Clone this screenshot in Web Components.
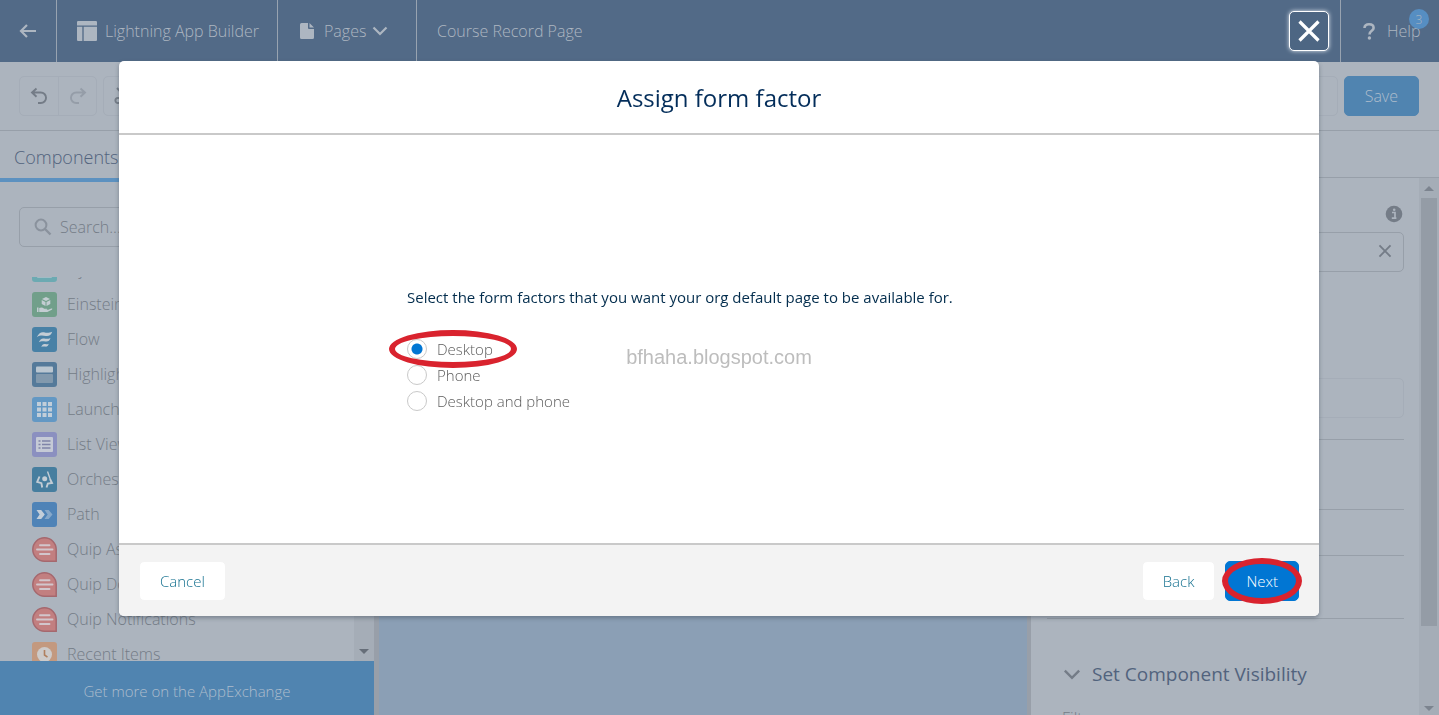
<!DOCTYPE html>
<html lang="en">
<head>
<meta charset="utf-8">
<meta name="viewport" content="width=device-width, initial-scale=1">
<title>Lightning App Builder</title>
<style>
  html, body { margin: 0; height: 100%; }
  body {
    font-family: "Open Sans", "Noto Sans", sans-serif;
    font-weight: 300;
    font-size: 16px;
    line-height: 24px;
    overflow: hidden;
    --surface: #acb4be;
    --line: #979fa9;
    --line-soft: #a5adb8;
    --navy: #526a87;
    --brand: #5084b0;
    --muted: #747c87;
    --ring: #d9232e;
  }
</style>
</head>
<body>
<app-builder></app-builder>

<script>
const ICONS = {
  back: ['0 0 18 16', '<path d="M8 2 2 8l6 6M2 8h15" fill="none" stroke="currentColor" stroke-width="2.2"/>'],
  layout: ['0 0 18 18', '<path d="M1 0h16a1 1 0 0 1 1 1v3H0V1a1 1 0 0 1 1-1zM0 5.200h4.800V18H1a1 1 0 0 1-1-1zM6 5.200H18V17a1 1 0 0 1-1 1H6z" fill="currentColor"/>'],
  page: ['0 0 14 16', '<path d="M1.500 0H8v5a1 1 0 0 0 1 1h5v8.500a1.500 1.500 0 0 1-1.500 1.500h-11A1.500 1.500 0 0 1 0 14.500v-13A1.500 1.500 0 0 1 1.500 0zM9.500 0 14 4.500H9.500z" fill="currentColor"/>'],
  chevron: ['0 0 16 10', '<path d="m1.500 1.500 6.500 6.500 6.500-6.500" fill="none" stroke="currentColor" stroke-width="2.200"/>'],
  help: ['0 0 12 17', '<path d="M1.500 5C1.500 2.500 3.200 1.300 6 1.300s4.600 1.400 4.600 3.600C10.600 8 6.500 7.600 6.500 11.500" fill="none" stroke="currentColor" stroke-width="2.600"/><circle cx="6.400" cy="15" r="1.700" fill="currentColor"/>'],
  undo: ['0 0 18 18', '<path d="M6.500 1.500 2 5.500l4.500 4.200M2.500 5.500h8.300a5 5 0 0 1 0 10.500H8" fill="none" stroke="currentColor" stroke-width="1.900"/>'],
  redo: ['0 0 18 18', '<path d="m11.500 1.500 4.500 4-4.500 4.200M15.500 5.500H7.200a5 5 0 0 0 0 10.500H10" fill="none" stroke="currentColor" stroke-width="1.900"/>'],
  cut: ['0 0 18 18', '<g fill="none" stroke="currentColor" stroke-width="1.900"><circle cx="4" cy="13.500" r="2.600"/><circle cx="14" cy="13.500" r="2.600"/><path d="m3 1 9.500 10.500M15 1 5.500 11.500"/></g>'],
  search: ['0 0 18 18', '<circle cx="7" cy="7" r="5.400" fill="none" stroke="currentColor" stroke-width="2"/><path d="m11 11 5.500 5.500" stroke="currentColor" stroke-width="2.400"/>'],
  close: ['0 0 24 24', '<path d="m2.500 2.500 19 19m0-19-19 19" stroke="currentColor" stroke-width="3.200"/>'],
  info: ['0 0 18 18', '<circle cx="9" cy="9" r="8.300" fill="currentColor"/><path d="M7 7.500h3V13M6.800 13.200h4.600" fill="none" stroke="#acb4be" stroke-width="1.700"/><circle cx="9.200" cy="4.800" r="1.300" fill="#acb4be"/>'],
  up: ['0 0 10 5', '<path d="M0 5h10L5 0z" fill="currentColor"/>'],
  down: ['0 0 10 5', '<path d="M0 0h10L5 5z" fill="currentColor"/>'],

  related: ['0 0 25 25', '<rect width="25" height="25" rx="3" fill="#6caab2"/><rect x="5" y="5" width="15" height="16" rx="1" fill="#a0bcc5"/>'],
  einstein: ['0 0 25 25', '<rect width="25" height="25" rx="3" fill="#719f8a"/><g fill="#c3cdd2"><path d="m14 5 4 2-4 2-4-2zM9.700 8l3.800 1.900v4L9.700 12zM18.300 8l-3.800 1.900v4l3.800-1.900z"/><path d="M5 15.500h1.500V20H5zM7.200 16c2-1 3.500-.5 5 .7h2.500c1 0 1 1 0 1.100h-2l3 .1 3.500-1.300c1.200-.2 1.500.5.600 1.200l-4.500 2.100H7.200z"/></g>'],
  flow: ['0 0 25 25', '<rect width="25" height="25" rx="3" fill="#4881a6"/><g fill="#c3cdd5"><path d="M4.800 10.200C6.500 6.500 9 4.600 12 5.300c2.500.6 4.500 1 8.200-.5-.8 3-3.200 4.700-6.400 4.200-3.300-.5-5.500-1-9 1.200z"/><path d="M6.800 15.200c1.200-3 3-4.200 5.400-3.700 2 .4 3.800.7 6.300-.5-.7 2.700-2.600 3.900-5 3.500-2.500-.4-4.200-.8-6.700.7z"/><path d="M9.300 19.900c.7-2.500 2.200-3.300 4-2.900 1.200.3 2 .4 3.400-.3-.4 2.200-1.800 3.100-3.500 2.900-1.500-.2-2.500-.3-3.900.3z"/></g>'],
  highlights: ['0 0 25 25', '<rect width="25" height="25" rx="3" fill="#557a9a"/><rect x="4" y="4.500" width="17" height="6" rx="1" fill="#bac6d0"/><rect x="4" y="12" width="17" height="9" rx="1" fill="#8299ad"/>'],
  launchpad: ['0 0 25 25', '<rect width="25" height="25" rx="3" fill="#6398c4"/><path d="M5 5h4v4H5zM10.500 5h4v4h-4zM16 5h4v4h-4zM5 10.500h4v4H5zM10.500 10.500h4v4h-4zM16 10.500h4v4h-4zM5 16h4v4H5zM10.500 16h4v4h-4zM16 16h4v4h-4z" fill="#c2ced9"/>'],
  list: ['0 0 25 25', '<rect width="25" height="25" rx="3" fill="#8b90c0"/><rect x="4" y="5" width="17" height="15" rx="1" fill="#c5cad6"/><path d="M6.500 9h2M10 9h8.500M6.500 12.500h2M10 12.500h8.500M6.500 16h2M10 16h8.500" stroke="#7f84a8" stroke-width="1.600"/>'],
  orchestration: ['0 0 25 25', '<rect width="25" height="25" rx="3" fill="#467e9f"/><circle cx="12.700" cy="11.800" r="2.500" fill="#c3cdd5"/><g fill="none" stroke="#c3cdd5" stroke-width="1.900"><path d="M7.500 9.500 5.200 15l4.200 1.200.8 4.300"/><path d="m18 12 2 4-4.200.6-1.300 3.900"/><path d="m15.500 4.500 2.700 7.500" stroke-width="1.400"/></g>'],
  path: ['0 0 25 25', '<rect width="25" height="25" rx="3" fill="#4f83b7"/><path d="M4.500 8h4.700l3.600 4.500L9.200 17H4.500L7.600 12.500z" fill="#c3ced9"/><path d="M12.500 8h4.200l3.800 4.500-3.800 4.500h-4.200l3.200-4.500z" fill="#86a8ca"/>'],
  quip: ['0 0 25 25', '<path d="M12.500.8a11.700 11.700 0 1 0 0 23.400h11.700V12.500A11.700 11.700 0 0 0 12.500.8z" fill="#c27f80" stroke="#a5686e" stroke-width="1.500"/><path d="M8 8.200h9.500M5 12.500h15.500M8 17h9.500" stroke="#d2c6cc" stroke-width="1.900" stroke-linecap="round"/>'],
  recent: ['0 0 25 25', '<rect width="25" height="25" rx="3" fill="#c3997f"/><circle cx="12.500" cy="12.500" r="7.500" fill="#cdcbca"/><path d="M12.500 8v5l3 2.200" fill="none" stroke="#b0805f" stroke-width="1.600"/>']
};

class BaseElement extends HTMLElement {
  connectedCallback() {
    if (this.shadowRoot) return;
    this.attachShadow({ mode: 'open' }).innerHTML =
      `<style>*{box-sizing:border-box} button,input{font:inherit;color:inherit} ${this.css()}</style>${this.html()}`;
  }
}

/* <ui-icon name size> : size is the width, the height follows the view box */
class UiIcon extends BaseElement {
  css() { return `:host{display:inline-block;flex:none;line-height:0}svg{display:block;width:100%}`; }
  html() {
    const [box, body] = ICONS[this.getAttribute('name')];
    const [, , w, h] = box.split(' ').map(Number);
    const width = Number(this.getAttribute('size') || w);
    return `<style>:host{width:${width}px}</style><svg viewBox="${box}" height="${Math.round(width * h / w)}" aria-hidden="true">${body}</svg>`;
  }
}

/* Red ellipse drawn over whatever is slotted into it */
class HighlightRing extends BaseElement {
  css() {
    return `:host{display:inline-block;position:relative}
      i{position:absolute;inset:var(--ring-inset,-3px);border:6px solid var(--ring);border-radius:50%;pointer-events:none}`;
  }
  html() { return `<slot></slot><i></i>`; }
}

class UiButton extends BaseElement {
  css() {
    return `:host{display:inline-block}
      button{height:40px;padding:0 20px;font-size:15px;border:1px solid #f3f3f3;border-radius:5px;background:#fff;color:#14708f;cursor:pointer;display:block}
      :host([variant=brand]) button{background:#0176d3;border-color:#0176d3;color:#fff}
      :host([variant=dim]) button{font-size:16px;background:var(--brand);border-color:var(--brand);color:#adbccc}`;
  }
  html() { return `<button type="button"><slot></slot></button>`; }
}

class AppHeader extends BaseElement {
  css() {
    return `:host{display:flex;height:62px;background:var(--navy);color:#adb6c1}
      a,button,.title{display:flex;align-items:center;height:100%;color:inherit;text-decoration:none;background:none;border:0;padding:0 20px;white-space:nowrap}
      .back{padding:0 19px;width:57px;border-right:1px solid #98a3b0}
      .app{gap:8px;width:221px;border-right:1px solid #98a3b0}
      .pages{width:139px;gap:6px;border-right:1px solid #98a3b0}
      .pages ui-icon:first-child{margin:0 4px 0 2px}
      .grow{flex:1}
      .help{position:relative;width:99px;gap:12px;padding:0 0 0 22px;border-left:1px solid #98a3b0}
      .badge{position:absolute;right:10px;top:9px;width:20px;height:20px;border-radius:50%;background:#568ec2;font-size:12px;line-height:22px;text-align:center}`;
  }
  html() {
    return `<a class="back" href="#" aria-label="Back"><ui-icon name="back"></ui-icon></a>
      <a class="app" href="#"><ui-icon name="layout" size="20"></ui-icon>Lightning App Builder</a>
      <button class="pages" type="button"><ui-icon name="page"></ui-icon>Pages<ui-icon name="chevron"></ui-icon></button>
      <div class="title">Course Record Page</div>
      <div class="grow"></div>
      <a class="help" href="#"><ui-icon name="help"></ui-icon>Help<span class="badge">3</span></a>`;
  }
}

class BuilderToolbar extends BaseElement {
  css() {
    return `:host{display:flex;align-items:center;height:69px;padding:0 20px 0 19px;gap:6px;border-bottom:1px solid var(--line);color:var(--muted)}
      .group{display:flex;border:1px solid var(--line-soft);border-radius:5px;height:40px}
      .group button{width:38px;display:grid;place-items:center;border:0;background:none;padding:0}
      .group button+button{border-left:1px solid var(--line-soft)}
      .group button[disabled]{color:#959da8}
      .grow{flex:1}`;
  }
  html() {
    return `<div class="group"><button type="button" aria-label="Undo"><ui-icon name="undo"></ui-icon></button><button type="button" disabled aria-label="Redo"><ui-icon name="redo"></ui-icon></button></div>
      <div class="group"><button type="button" aria-label="Cut"><ui-icon name="cut"></ui-icon></button></div>
      <div class="grow"></div>
      <div class="group"><button type="button" aria-label="More"></button></div>
      <ui-button variant="dim">Save</ui-button>`;
  }
}

class ScrollTrack extends BaseElement {
  css() {
    return `:host{display:flex;flex-direction:column;align-items:center;width:20px;background:#a5adb7;color:#7c848f;padding:8px 0 4px;gap:7px}
      .thumb{flex:none;width:16px;height:calc(100% - 97px);background:#949ca6}
      .grow{flex:1}
      :host([dark]){color:#666e79;padding-bottom:7px}`;
  }
  html() { return `<ui-icon name="up"></ui-icon><div class="thumb"></div><div class="grow"></div><ui-icon name="down"></ui-icon>`; }
}

class ComponentItem extends BaseElement {
  css() { return `:host{display:flex;align-items:center;gap:10px;height:35px;white-space:nowrap}span{padding-bottom:2px}`; }
  html() { return `<ui-icon name="${this.getAttribute('icon')}"></ui-icon><span><slot></slot></span>`; }
}

class ComponentPanel extends BaseElement {
  css() {
    return `:host{display:flex;flex-direction:column;width:379px;border-right:5px solid #989fa9;color:var(--muted);min-height:0}
      .tab{display:flex;align-items:center;height:51px;padding:4px 14px 0;border:0;border-bottom:4px solid #5c91c0;background:none;font-size:18px;color:#52637d}
      .search{display:flex;align-items:center;gap:8px;height:40px;margin:25px 19px 30px;padding:0 14px;border:1px solid var(--line);border-radius:5px}
      .search ui-icon{color:#8a929d}
      input{flex:1;min-width:0;border:0;background:none;outline:0;padding:0}
      input::placeholder{color:var(--muted);opacity:1}
      .scroll{display:flex;flex:1;min-height:0}
      .list{flex:1;overflow:hidden;padding-left:32px}
      .inner{margin-top:-25px}
      .more{display:grid;place-items:center;height:54px;padding-top:6px;background:var(--brand);color:#adbccc;text-decoration:none;font-size:15px}`;
  }
  html() {
    const rows = [['related', 'Dynamic Related List'], ['einstein', 'Einstein Next Best Action'], ['flow', 'Flow'],
      ['highlights', 'Highlights Panel'], ['launchpad', 'Launchpad'], ['list', 'List View'],
      ['orchestration', 'Orchestration Work Guide'], ['path', 'Path'], ['quip', 'Quip Associated Documents'],
      ['quip', 'Quip Document'], ['quip', 'Quip Notifications'], ['recent', 'Recent Items']];
    return `<button class="tab" type="button">Components</button>
      <label class="search"><ui-icon name="search"></ui-icon><input type="search" placeholder="Search..." aria-label="Search components"></label>
      <div class="scroll"><div class="list"><div class="inner">${rows.map(([i, t]) => `<component-item icon="${i}">${t}</component-item>`).join('')}</div></div><scroll-track dark></scroll-track></div>
      <a class="more" href="#">Get more on the AppExchange</a>`;
  }
}

class PageCanvas extends BaseElement {
  css() { return `:host{display:block;flex:1;background:#8b9fb5}`; }
  html() { return `<slot></slot>`; }
}

class PropertyPanel extends BaseElement {
  css() {
    return `:host{display:flex;flex-direction:column;width:412px;border-left:4px solid #989fa9;min-height:0;color:var(--muted)}
      .tabs{flex:none;height:47px;border-bottom:1px solid var(--line)}
      .row{display:flex;flex:1;min-height:0}
      .body{flex:1;overflow:hidden;padding:0 15px 0 16px}
      section{border-bottom:1px solid var(--line)}
      .first{padding:27px 0 21px}
      .info{display:flex;justify-content:flex-end;height:18px;margin-bottom:9px;padding-right:1px}
      .field{display:flex;align-items:center;height:40px;border:1px solid var(--line);border-radius:5px;padding-right:11px}
      .field input{flex:1;border:0;background:none}
      .clear{border:0;background:none;padding:0}
      .box{height:40px;margin-top:106px;border:1px solid var(--line-soft);border-radius:5px}
      .s70{height:70px}.s46{height:46px}.s63{height:63px}
      h2{display:flex;align-items:center;gap:11px;margin:39px 0 16px 16px;font-size:19px;line-height:32px;font-weight:400;color:#52637d}
      h2 ui-icon{color:var(--muted)}
      .filters{margin-left:15px}`;
  }
  html() {
    return `<div class="tabs"></div><div class="row"><div class="body">
      <section class="first"><div class="info"><ui-icon name="info"></ui-icon></div>
        <div class="field"><input type="text" aria-label="Page"><button class="clear" type="button" aria-label="Clear"><ui-icon name="close" size="14"></ui-icon></button></div>
        <div class="box"></div></section>
      <section class="s70"></section><section class="s46"></section><section class="s63"></section>
      <h2><ui-icon name="chevron" size="18"></ui-icon>Set Component Visibility</h2>
      <div class="filters">Filters</div>
      </div><scroll-track></scroll-track></div>`;
  }
}

class FormFactorPicker extends BaseElement {
  css() {
    return `:host{display:block;width:624px;max-width:100%}
      fieldset{border:0;margin:0;padding:0}
      legend{padding:0;margin-bottom:27px;color:#032d4d;font-weight:400;font-size:15px;line-height:24px}
      .option{display:block;height:26px;font-size:15px;color:#5c5c5c}
      label{display:flex;align-items:center;gap:10px;height:26px}
      highlight-ring{--ring-inset:-6px -24px -6px -18px}
      input{appearance:none;flex:none;width:20px;height:20px;margin:0;border:1px solid #c9c9c9;border-radius:50%;background:#fff}
      input:checked{background:radial-gradient(circle,#0176d3 5px,#fff 6px)}`;
  }
  html() {
    return `<fieldset><legend>Select the form factors that you want your org default page to be available for.</legend>
      <div class="option"><highlight-ring><label><input type="radio" name="factor" checked>Desktop</label></highlight-ring></div>
      <div class="option"><label><input type="radio" name="factor">Phone</label></div>
      <div class="option"><label><input type="radio" name="factor">Desktop and phone</label></div></fieldset>`;
  }
}

class AssignDialog extends BaseElement {
  css() {
    return `:host{position:fixed;inset:0;display:flex;padding:61px 120px 99px 119px}
      .dialog{position:relative;flex:1;display:flex;flex-direction:column;background:#fff;border-radius:5px;box-shadow:0 2px 4px rgba(60,70,85,.45)}
      .close{position:absolute;right:-10px;top:-50px;width:40px;height:40px;display:grid;place-items:center;padding:0;color:#fff;background:#4d6683;border:1px solid #fff;border-radius:5px;box-shadow:0 0 4px #dfe6ee}
      header{height:74px;display:grid;place-items:center;padding-top:2px;border-bottom:2px solid #c9c9c9}
      h1{margin:0;font-size:24px;line-height:32px;font-weight:400;color:#032d5a}
      main{position:relative;flex:1;display:flex;justify-content:center;padding-top:150px}
      .mark{position:absolute;left:0;right:0;top:210px;text-align:center;font:20px/24px "Liberation Sans",Arial,sans-serif;color:#bdbdbd;pointer-events:none}
      footer{display:flex;align-items:center;gap:10px;height:73px;padding:0 20px;background:#f3f3f3;border-top:2px solid #c9c9c9;border-radius:0 0 5px 5px}
      .grow{flex:1}
      highlight-ring{--ring-inset:-3px}`;
  }
  html() {
    return `<div class="dialog" role="dialog" aria-label="Assign form factor">
      <button class="close" type="button" aria-label="Close"><ui-icon name="close"></ui-icon></button>
      <header><h1>Assign form factor</h1></header>
      <main><form-factor-picker></form-factor-picker><div class="mark">bfhaha.blogspot.com</div></main>
      <footer><ui-button>Cancel</ui-button><div class="grow"></div><ui-button>Back</ui-button><highlight-ring><ui-button variant="brand">Next</ui-button></highlight-ring></footer></div>`;
  }
}

class AppBuilder extends BaseElement {
  css() {
    return `:host{display:flex;flex-direction:column;height:100vh;background:var(--surface)}
      app-header,builder-toolbar{flex:none}
      .work{display:flex;flex:1;min-height:0}
      component-panel,property-panel{flex:none}`;
  }
  html() {
    return `<app-header></app-header><builder-toolbar></builder-toolbar>
      <div class="work"><component-panel></component-panel><page-canvas></page-canvas><property-panel></property-panel></div>
      <assign-dialog></assign-dialog>`;
  }
}

Object.entries({
  'ui-icon': UiIcon, 'highlight-ring': HighlightRing, 'ui-button': UiButton, 'app-header': AppHeader,
  'builder-toolbar': BuilderToolbar, 'scroll-track': ScrollTrack, 'component-item': ComponentItem,
  'component-panel': ComponentPanel, 'page-canvas': PageCanvas, 'property-panel': PropertyPanel,
  'form-factor-picker': FormFactorPicker, 'assign-dialog': AssignDialog, 'app-builder': AppBuilder
}).forEach(([name, type]) => customElements.define(name, type));
</script>
</body>
</html>
